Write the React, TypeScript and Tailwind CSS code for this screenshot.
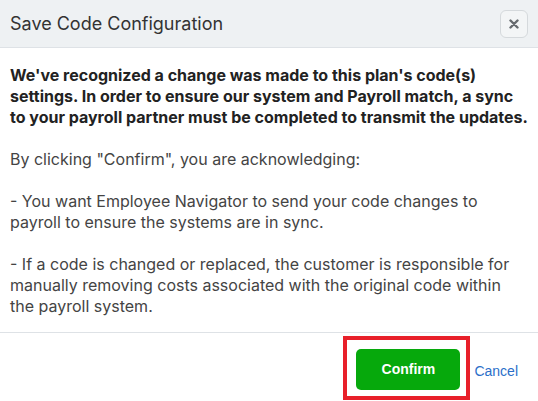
export default function App() {
  return (
    <div className="w-[538px] h-[401px] bg-white overflow-hidden font-['Inter',sans-serif]">
      {/* header */}
      <div className="flex h-[48px] items-center justify-between border-b border-[#dee2e6] bg-[#eef1f3] pl-[10px] pr-[10px]">
        <h1 className="text-[18px] text-[#333]">Save Code Configuration</h1>
        <button className="flex h-[28px] w-[28px] items-center justify-center rounded-[6px] border border-[#d5d9dc] bg-[#f3f5f6]">
          <svg width="10" height="10" viewBox="0 0 10 10">
            <path d="M1.5 1.5 L8.5 8.5 M8.5 1.5 L1.5 8.5" stroke="#666a6e" strokeWidth="2.4" strokeLinecap="round" />
          </svg>
        </button>
      </div>

      {/* body */}
      <div className="space-y-[21px] pl-[10px] pr-[10px] pt-[17px] pb-[15px] text-[16px] leading-[21px] text-[#444]">
        <p className="font-bold text-[#222]">
          We've recognized a change was made to this plan's code(s) settings. In order to ensure our system and Payroll match, a sync to your payroll partner must be completed to transmit the updates.
        </p>
        <p>By clicking "Confirm", you are acknowledging:</p>
        <p>- You want Employee Navigator to send your code changes to payroll to ensure the systems are in sync.</p>
        <p>
          - If a code is changed or replaced, the customer is responsible for manually removing costs associated with the original code within the payroll system.
        </p>
      </div>

      {/* footer */}
      <div className="flex items-start justify-end border-t border-[#dee2e6] pr-[20px] pt-[3px]">
        <div className="border-[4px] border-[#e8202a] pl-[9px] pt-[9px] pr-[6px] pb-[6px]">
          <button className="h-[41px] w-[104px] rounded-[5px] bg-[#06a90c] font-['Liberation_Sans',sans-serif] text-[14px] font-bold text-white">
            Confirm
          </button>
        </div>
        <button className="ml-[4px] mt-[25px] font-['Liberation_Sans',sans-serif] text-[14px] text-[#2b6fc9]">Cancel</button>
      </div>
    </div>
  );
}
